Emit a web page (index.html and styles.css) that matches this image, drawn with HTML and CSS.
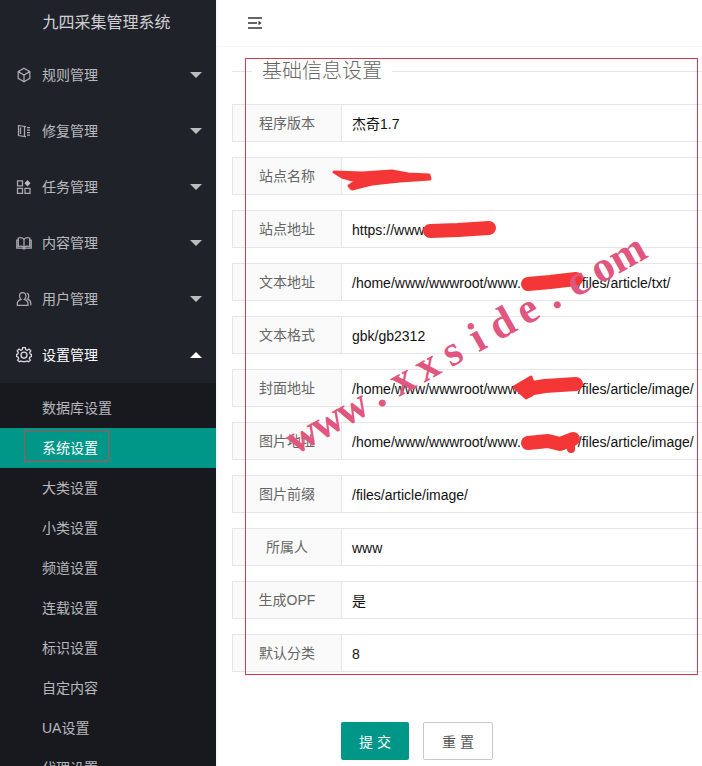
FILE: index.html
```html
<!DOCTYPE html>
<html lang="zh-CN">
<head>
<meta charset="utf-8">
<title>九四采集管理系统</title>
<link rel="stylesheet" href="styles.css">
</head>
<body>
<div class="app">
  <aside class="side">
    <div class="logo">九四采集管理系统</div>
    <nav class="nav">
      <a class="nav-item">
        <svg class="ico" viewBox="0 0 16 16"><path d="M8 1.300 13.800 4.600V11.400L8 14.700 2.200 11.400V4.600Z"/><path d="M2.600 4.900 8 8l5.400-3.100M8 8v6.300"/></svg>
        <span class="nav-text">规则管理</span><i class="caret"></i>
      </a>
      <a class="nav-item">
        <svg class="ico" viewBox="0 0 16 16"><path d="M2.500 2.500 8.500 3.500V13.500L2.500 12.500ZM4.500 4.500V11M8.500 3.500H10M8.500 13.500H10M11 4.500H14M11 7H14M11 9.500H14M11 12H14"/></svg>
        <span class="nav-text">修复管理</span><i class="caret"></i>
      </a>
      <a class="nav-item">
        <svg class="ico" viewBox="0 0 16 16"><path d="M1.500 1.800H6.500V6.800H1.500ZM1.500 9.300H6.500V14.300H1.500ZM9 9.300H14V14.300H9Z"/><path class="solid" d="M11.500 1 14.500 4.200 11.500 7.400 8.500 4.200Z"/></svg>
        <span class="nav-text">任务管理</span><i class="caret"></i>
      </a>
      <a class="nav-item">
        <svg class="ico" viewBox="0 0 16 16"><path d="M8 4.200C6.500 2.600 4 2.300 2.300 3V11.500C4 11 6.500 11.200 8 12.500 9.500 11.200 12 11 13.700 11.500V3C12 2.300 9.500 2.600 8 4.200ZM8 4.200V12.500M2.300 5H.8V13.200H6.300L8 14 9.700 13.200H15.200V5H13.700"/></svg>
        <span class="nav-text">内容管理</span><i class="caret"></i>
      </a>
      <a class="nav-item">
        <svg class="ico" viewBox="0 0 16 16"><path d="M6.700 1.500C4.600 1.500 3.500 3.200 3.500 5 3.500 6.500 4.200 7.700 5 8.300 3 9 1.300 10.300 1.300 12.500V14.300H12V12.500C12 10.300 10.300 9 8.400 8.300 9.200 7.700 9.900 6.500 9.900 5 9.900 3.200 8.800 1.500 6.700 1.500ZM10.800 2C12.200 2.500 12.800 3.700 12.800 5 12.800 6.200 12.200 7.200 11.500 7.900 13.300 8.700 14.800 10 14.800 12.300V14.300"/></svg>
        <span class="nav-text">用户管理</span><i class="caret"></i>
      </a>
      <a class="nav-item is-open">
        <svg class="ico" viewBox="0 0 16 16"><path d="M6.700 1H9.300L9.700 3 11.300 3.700 13 2.600 14.800 4.400 13.700 6.100 14.400 7.700 15.500 8.100V10.100L14 10.500 13.300 12 14.400 13.700 12.600 15.300 11 14.400 9.500 15H6.500L5 14.400 3.400 15.300 1.600 13.700 2.700 12 2 10.500.5 10.100V8.100L1.600 7.700 2.300 6.100 1.200 4.400 3 2.600 4.700 3.700 6.300 3Z" transform="translate(0 -.5)"/><circle cx="8" cy="8" r="3"/></svg>
        <span class="nav-text">设置管理</span><i class="caret caret-up"></i>
      </a>
      <div class="sub">
        <a class="sub-item">数据库设置</a>
        <a class="sub-item is-active">系统设置</a>
        <a class="sub-item">大类设置</a>
        <a class="sub-item">小类设置</a>
        <a class="sub-item">频道设置</a>
        <a class="sub-item">连载设置</a>
        <a class="sub-item">标识设置</a>
        <a class="sub-item">自定内容</a>
        <a class="sub-item">UA设置</a>
        <a class="sub-item">代理设置</a>
      </div>
    </nav>
  </aside>

  <main class="main">
    <header class="top">
      <svg class="flex-ico" viewBox="0 0 14 12"><path d="M0 1H14M0 6H9M0 11H14"/><path class="solid" d="M10.500 3.800 13.500 6 10.500 8.200Z"/></svg>
    </header>
    <form class="form">
      <fieldset class="field">
        <legend class="legend">基础信息设置</legend>
      </fieldset>
      <div class="row"><label class="lab">程序版本</label><div class="val">杰奇1.7</div></div>
      <div class="row"><label class="lab">站点名称</label><div class="val"></div></div>
      <div class="row"><label class="lab">站点地址</label><div class="val">https://www.</div></div>
      <div class="row"><label class="lab">文本地址</label><div class="val">/home/www/wwwroot/www.<span class="gap"></span>/files/article/txt/</div></div>
      <div class="row"><label class="lab">文本格式</label><div class="val">gbk/gb2312</div></div>
      <div class="row"><label class="lab">封面地址</label><div class="val">/home/www/wwwroot/www.<span class="gap"></span>/files/article/image/</div></div>
      <div class="row"><label class="lab">图片地址</label><div class="val">/home/www/wwwroot/www.<span class="gap"></span>/files/article/image/</div></div>
      <div class="row"><label class="lab">图片前缀</label><div class="val">/files/article/image/</div></div>
      <div class="row"><label class="lab">所属人</label><div class="val">www</div></div>
      <div class="row"><label class="lab">生成OPF</label><div class="val">是</div></div>
      <div class="row"><label class="lab">默认分类</label><div class="val">8</div></div>
      <div class="actions">
        <button class="btn btn-primary" type="button">提 交</button>
        <button class="btn btn-plain" type="button">重 置</button>
      </div>
    </form>
  </main>
</div>

<svg class="scribble" viewBox="0 0 702 766">
  <path class="blob" d="M334 172 362 173 392 171 408 174 429 175 430 179 400 181 372 184 352 189 349 186 356 181 342 177Z"/>
  <path class="s14" d="M430 231 458 230 489 228"/>
  <path class="s14" d="M528 284 550 282 576 279"/>
  <path class="s14" d="M527 389 545 386 576 384"/>
  <path class="blob" d="M514 387 531 377 534 385 532 395 526 398Z"/>
  <path class="s14" d="M528 443 548 441 560 444 573 439"/>
  <path class="s8" d="M571 442 571 449"/>
</svg>
<div class="mark-box"></div>
<div class="mark-nav"></div>
<div class="watermark"><span>w</span><span>w</span><span>w</span><span>.</span><span>x</span><span>x</span><span>s</span><span>i</span><span>d</span><span>e</span><span>.</span><span>c</span><span>o</span><span>m</span></div>
</body>
</html>
```

FILE: styles.css
```css
* { box-sizing: border-box; }
html, body { margin: 0; height: 766px; overflow: hidden; background: #fff; }
body { font: 14px "Liberation Sans", "Noto Sans CJK SC", sans-serif; color: #333; position: relative; }
.app { display: flex; height: 766px; overflow: hidden; }

.side { width: 216px; flex: none; background: #20222a; height: 766px; overflow: hidden; }
.logo { width: 216px; height: 47px; line-height: 45px; padding-right: 3px; text-align: center; font-size: 16px; color: rgba(255,255,255,.8); background: #20222a; }
.nav { display: block; }
.nav-item { display: flex; align-items: center; height: 56px; padding-left: 16px; color: rgba(255,255,255,.7); }
.nav-item.is-open { color: #fff; }
.ico { width: 16px; height: 16px; flex: none; fill: none; stroke: rgba(255,255,255,.62); stroke-width: 1.25; }
.is-open .ico { stroke: rgba(255,255,255,.85); }
.ico .solid { fill: rgba(255,255,255,.7); stroke: none; }
.nav-text { margin-left: 10px; flex: 1; font-size: 14px; line-height: 20px; }
.caret { width: 0; height: 0; margin-right: 14px; border-style: solid; border-width: 6px 6px 0; border-color: rgba(255,255,255,.7) transparent transparent; }
.caret-up { border-width: 0 6px 6px; border-color: transparent transparent #fff; }

.sub { background: #18191f; padding-top: 5px; height: 400px; }
.sub-item { display: block; height: 40px; line-height: 40px; padding-left: 42px; color: rgba(255,255,255,.7); }
.sub-item.is-active { background: #009688; color: #fff; }

.main { flex: 1; min-width: 0; border-left: 2px solid #f8f8fb; }
.top { height: 47px; padding: 17px 0 0 30px; border-bottom: 1px solid #f6f6f6; }
.flex-ico { display: block; width: 14px; height: 12px; fill: none; stroke: #333; stroke-width: 1.6; }
.flex-ico .solid { fill: #333; stroke: none; }

.form { width: 600px; padding: 0 0 0 14px; }
.field { margin: 14px 0 0; padding: 0; border: 0; border-top: 1px solid #e6e6e6; height: 43px; }
.legend { margin-left: 20px; padding: 0 10px; font-size: 20px; line-height: 20px; color: #666; font-weight: 300; }
.row { display: flex; height: 38px; margin-bottom: 15px; border: 1px solid #e6e6e6; }
.lab { width: 109px; flex: none; padding: 0 8px; text-align: center; line-height: 37px; color: #666; background: #fafafa; border-right: 1px solid #e6e6e6; }
.val { flex: 1; padding-left: 10px; line-height: 38px; color: #111; white-space: nowrap; }
.gap { display: inline-block; width: 57px; }
.actions { display: flex; gap: 14px; padding: 35px 0 0 109px; }
.btn { height: 38px; border-radius: 2px; font: 14px "Liberation Sans", "Noto Sans CJK SC", sans-serif; padding: 0; }
.btn-primary { width: 68px; border: 0; background: #009688; color: #fff; }
.btn-plain { width: 70px; border: 1px solid #c9c9c9; background: #fff; color: #555; }

.scribble { position: absolute; left: 0; top: 0; width: 702px; height: 766px; fill: none; stroke: #f53636; stroke-linecap: round; stroke-linejoin: round; pointer-events: none; }
.blob { fill: #f53636; stroke-width: 3; }
.s8 { stroke-width: 8; }
.s14 { stroke-width: 14; }
.mark-box { position: absolute; left: 245px; top: 58px; width: 453px; height: 617px; border: 1px solid #d8384f; }
.mark-nav { position: absolute; left: 24px; top: 430px; width: 85px; height: 32px; border: 1px solid #b5504f; }
.watermark { position: absolute; left: 299px; top: 420px; display: flex; font: bold 43px/40px "Liberation Serif", serif; color: #e0567f; white-space: nowrap; transform: rotate(-29.300deg); transform-origin: 0 100%; }
.watermark span { width: 28.700px; flex: none; display: flex; justify-content: center; }
```
